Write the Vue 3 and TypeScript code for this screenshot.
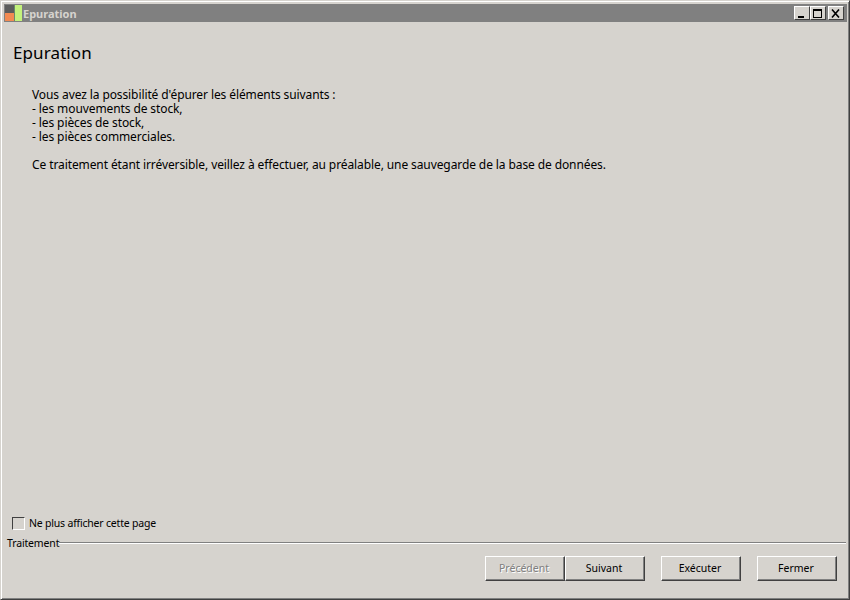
<script setup lang="ts">
const choices = ['les mouvements de stock,', 'les pièces de stock,', 'les pièces commerciales.'];
const actions = [
  { label: 'Exécuter' },
  { label: 'Fermer' },
];
</script>

<template>
  <div class="window">
    <div class="titlebar">
      <svg class="app-icon" width="17" height="16" viewBox="0 0 17 16">
        <rect x="0" y="0" width="9" height="8" fill="#5c5c5c" />
        <rect x="0" y="8" width="9" height="8" fill="#f28a52" />
        <rect x="9" y="0" width="1" height="16" fill="#6a8a6a" />
        <rect x="10" y="0" width="7" height="16" fill="#c4f27c" />
      </svg>
      <span class="title">Epuration</span>
      <div class="caption-btns">
        <button class="caption"><svg width="10" height="9" viewBox="0 0 10 9"><rect x="1" y="7" width="6" height="2" fill="#000" /></svg></button>
        <button class="caption"><svg width="10" height="9" viewBox="0 0 10 9"><path d="M0 0h9v9h-9z M1 2v6h7v-6z" fill="#000" fill-rule="evenodd" /></svg></button>
        <button class="caption close"><svg width="10" height="9" viewBox="0 0 10 9"><path d="M1 0.5l7 8M8 0.5l-7 8" stroke="#000" stroke-width="1.6" fill="none" /></svg></button>
      </div>
    </div>

    <div class="page">
      <h1>Epuration</h1>
      <div class="intro">
        <p>Vous avez la possibilité d'épurer les éléments suivants :</p>
        <p v-for="c in choices" :key="c">- {{ c }}</p>
        <p class="spaced">Ce traitement étant irréversible, veillez à effectuer, au préalable, une sauvegarde de la base de données.</p>
      </div>
      <label class="skip"><span class="check"></span>Ne plus afficher cette page</label>
      <div class="group-title"><span>Traitement</span><i></i></div>
      <div class="buttons">
        <div class="pair">
          <button class="btn" disabled>Précédent</button>
          <button class="btn">Suivant</button>
        </div>
        <button v-for="a in actions" :key="a.label" class="btn">{{ a.label }}</button>
      </div>
    </div>
  </div>
</template>

<style>
html, body { margin: 0; background: #d6d3ce; }
</style>

<style scoped>
.window {
  width: 850px;
  height: 600px;
  box-sizing: border-box;
  display: flex;
  flex-direction: column;
  padding: 3px 2px 1px 3px;
  background: #d6d3ce;
  border: 1px solid;
  border-color: #d6d3ce #404040 #404040 #d6d3ce;
  box-shadow: inset 1px 1px 0 #fff, inset -1px -1px 0 #808080;
  font-family: "Noto Sans", Tahoma, sans-serif;
  font-size: 12px;
  letter-spacing: -0.1px;
  color: #000;
}
.titlebar {
  height: 18px;
  flex: none;
  display: flex;
  align-items: center;
  background: #808080;
  padding: 0 3px 0 1px;
}
.app-icon { flex: none; margin-right: 1px; }
.title {
  color: #d6d3ce;
  font-weight: 700;
  font-size: 11px;
  letter-spacing: 0;
}
.caption-btns { margin-left: auto; display: flex; }
.caption {
  width: 16px;
  height: 14px;
  padding: 0;
  display: flex;
  align-items: center;
  justify-content: center;
  background: #d6d3ce;
  border: 1px solid;
  border-color: #fff #404040 #404040 #fff;
}
.close { margin-left: 2px; }
.page {
  flex: 1;
  display: flex;
  flex-direction: column;
  min-height: 0;
}
h1 {
  margin: 20px 0 0 9px;
  font-size: 17px;
  line-height: 22px;
  font-weight: 400;
  letter-spacing: 0.1px;
}
.intro { margin: 24px 0 0 28px; flex: 1; }
.intro p { margin: 0; line-height: 14px; white-space: nowrap; }
.intro .spaced { margin-top: 14px; }
.skip {
  display: flex;
  align-items: center;
  margin-left: 8px;
  height: 16px;
  font-size: 10.5px;
  letter-spacing: -0.2px;
}
.check {
  width: 11px;
  height: 11px;
  margin-right: 4px;
  background: #d6d3ce;
  border: 1px solid;
  border-color: #404040 #fff #fff #404040;
}
.group-title {
  display: flex;
  align-items: center;
  margin: 5px 1px 0 3px;
  height: 13px;
  font-size: 10.5px;
  letter-spacing: -0.15px;
}
.group-title i {
  flex: 1;
  height: 0;
  border-top: 1px solid #808080;
  border-bottom: 1px solid #fff;
}
.buttons {
  display: flex;
  justify-content: flex-end;
  gap: 16px;
  margin: 7px 10px 0 0;
  padding-bottom: 17px;
}
.pair { display: flex; }
.btn {
  width: 80px;
  height: 25px;
  padding: 0 2px 2px 0;
  background: #d6d3ce;
  border: 1px solid;
  border-color: #fff #404040 #404040 #fff;
  box-shadow: inset -1px -1px 0 #808080;
  font-family: inherit;
  font-size: 10.5px;
  letter-spacing: 0;
  color: #000;
}
.btn:disabled {
  color: #808080;
  text-shadow: 1px 1px 0 #fff;
}
</style>
